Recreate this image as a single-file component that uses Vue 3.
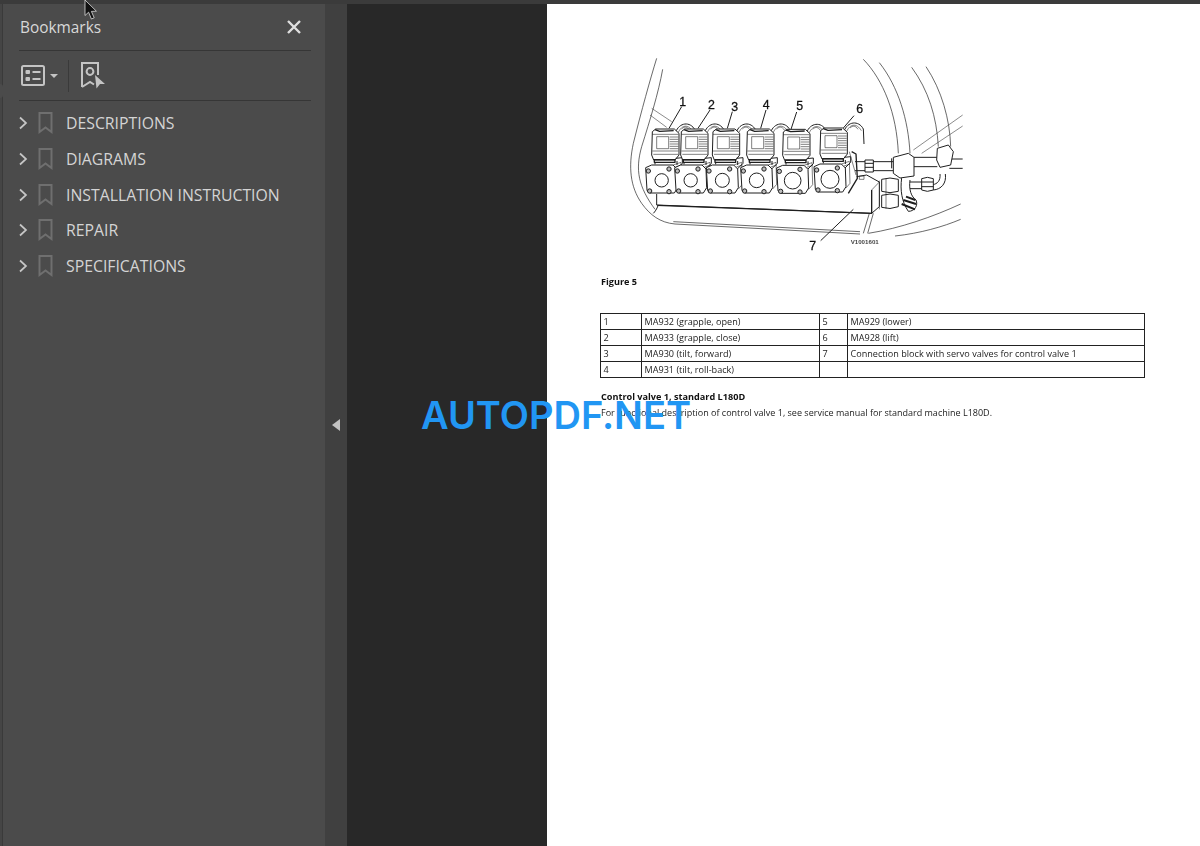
<template>
  <div class="viewer">
    <div class="top-strip"></div>
    <div class="main">
      <div class="edge"><span class="edge-notch"></span></div>

      <aside class="bookmarks">
        <header class="panel-head">
          <span class="panel-title">Bookmarks</span>
          <svg class="close" width="16" height="16" viewBox="0 0 16 16">
            <path d="M2 2 L14 14 M14 2 L2 14" />
          </svg>
        </header>

        <div class="toolbar">
          <svg width="24" height="21" viewBox="0 0 24 21" class="tool-icon">
            <rect x="1" y="1" width="22" height="19" rx="1.5" class="tool-line" />
            <rect x="4.5" y="5" width="4.5" height="4" rx="1" class="tool-fill" />
            <rect x="4.5" y="12" width="4.5" height="4" rx="1" class="tool-fill" />
            <path d="M11.5 7 H19.5 M11.5 14 H19.5" class="tool-line" />
          </svg>
          <span class="caret"></span>
          <span class="tool-sep"></span>
          <svg width="25" height="27" viewBox="0 0 25 27" class="tool-icon">
            <path d="M1 25 V1 H17 V13 M1 25 L9 20 L13 22.5" class="tool-line" />
            <circle cx="9" cy="9.5" r="3.4" class="tool-line" />
            <path d="M14 13 L24 22 L19 22 L15.5 26.5 Z" class="tool-fill" />
          </svg>
        </div>

        <ul class="tree">
          <li v-for="item in bookmarks" :key="item" class="tree-row">
            <svg width="10" height="14" viewBox="0 0 10 14" class="chevron">
              <path d="M2 1.5 L8 7 L2 12.5" />
            </svg>
            <svg width="15" height="22" viewBox="0 0 15 22" class="mark">
              <path d="M1.5 1 H13.5 V20 L7.5 15.5 L1.5 20 Z" />
            </svg>
            <span class="tree-label">{{ item }}</span>
          </li>
        </ul>
      </aside>

      <div class="splitter"><span class="split-arrow"></span></div>
      <div class="gutter"></div>

      <main class="page">
        <svg class="figure" width="380" height="210" viewBox="0 0 1140 630">
          <!-- cab outline and hoses -->
          <g class="ln outline">
            <path d="M170 25 C150 90 125 180 100 280 C85 350 90 410 125 460 C150 495 180 518 225 522 L780 552" />
            <path d="M188 58 C175 130 150 210 125 290 C105 360 115 410 165 478" />
            <path d="M155 175 L215 215 M150 195 L200 232" class="thin" />
            <path d="M220 515 L780 545" />
            <path d="M790 28 C850 90 890 190 895 310" />
            <path d="M838 38 C895 110 925 210 930 310" />
            <path d="M935 52 C985 120 1010 200 1015 290" />
            <path d="M978 50 C1025 120 1050 210 1052 290" />
            <path d="M940 300 L1088 195 M965 310 L1088 228" class="thin" />
            <path d="M805 550 C900 535 1000 500 1082 462" />
            <path d="M885 558 C960 550 1030 530 1082 508" />
            <path d="M790 550 L808 490 M803 550 L820 490" />
          </g>

          <!-- fittings on the right -->
          <g class="ln">
            <path d="M765 335 H880 M765 362 H880" />
            <path d="M795 330 H820 V366 H795 Z M795 340 H820 M795 352 H820" class="solid" />
            <path d="M875 325 V355" />
            <path d="M880 322 L925 310 L942 322 V378 L900 384 L880 370 Z" class="solid" />
            <path d="M942 322 H1012 M942 350 H1012 M1052 327 H1088 M1048 355 H1088" />
            <path d="M1012 295 L1045 285 L1060 305 L1052 345 L1020 352 L1010 330 Z" class="solid" />
            <path d="M1036 372 C1040 400 1024 418 1000 420 M1020 372 C1022 392 1012 402 998 404" />
            <path d="M965 386 Q982 378 1000 386 V420 Q982 428 965 420 Z M965 396 H1000 M965 410 H1000" class="solid" />
            <path d="M930 396 H965 M930 416 H965" />
            <path d="M905 384 C900 420 905 455 925 484 C945 484 955 465 948 450 C934 440 926 420 930 390" class="solid" />
            <path d="M845 388 Q870 380 895 388 V424 Q870 432 845 424 Z M845 436 Q870 428 895 436 V470 Q870 480 845 472 Z" class="solid" />
            <path d="M838 392 V478 M858 386 V476" class="thin" />
            <path d="M905 462 L945 478 M910 450 L948 462 M918 440 L946 450" class="heavy" />
          </g>

          <!-- manifold block -->
          <g class="ln">
            <path d="M170 432 V465 L815 490 L838 470 V396 L800 375 L770 380" class="solid" />
            <path d="M172 466 L815 490 V420" class="thick" />
            <path d="M815 420 L838 396" class="thin" />
            <path d="M175 465 C170 478 165 485 160 490" />
            <rect x="778" y="378" width="14" height="10" class="thin" />
          </g>

          <!-- solenoid valves -->
          <g v-for="unit in valves" :key="unit.label" :transform="`translate(${unit.x} ${unit.y})`" class="ln">
            <path d="M92 -98 C102 -128 136 -132 150 -105 L152 -60" class="solid" />
            <path d="M100 -98 C110 -120 130 -124 144 -100 M110 -108 C118 -116 126 -116 134 -104" class="thin" />
            <path d="M22 -100 L32 -108 H88 L102 -95 V-30 L90 -15 H26 L20 -30 Z" class="solid" />
            <path d="M30 -106 L44 -101 L86 -103" class="thick" />
            <rect x="35" y="-85" width="36" height="36" class="thin" />
            <path d="M22 -92 H100 M22 -42 H100 M25 -32 H100" class="thin" />
            <path d="M74 -84 H100 M74 -77 H100 M74 -70 H100 M74 -63 H100 M74 -56 H100 M74 -49 H100" class="thin" />
            <path d="M28 -16 H90 V-8 H28 Z" class="thick" />
            <path d="M30 -8 V-2 M92 -20 L112 -22 V-5 L95 12 M96 -12 L96 0" />
            <path d="M2 8 L20 0 H84 L96 12 L98 68 L88 84 H14 L6 76 Z" class="solid" />
            <path d="M84 0 L108 -8 L110 58 L98 72 M92 6 L110 0" class="thin" />
            <circle cx="50" cy="46" :r="unit.r" />
            <g class="bolts">
              <circle cx="10" cy="18" r="6.5" />
              <circle cx="72" cy="12" r="6.5" />
              <circle cx="14" cy="78" r="6.5" />
              <circle cx="72" cy="80" r="6.5" />
            </g>
            <path :d="unit.leader" />
          </g>
          <path d="M755 305 L768 312 L772 385 L745 430" class="ln thick" />
          <path d="M748 305 L768 375" class="ln thin" />

          <!-- leader for the manifold -->
          <path d="M760 478 L662 572" class="ln" />
          <text x="238" y="168" class="callout">1</text>
          <text x="324" y="178" class="callout">2</text>
          <text x="394" y="182" class="callout">3</text>
          <text x="488" y="176" class="callout">4</text>
          <text x="589" y="181" class="callout">5</text>
          <text x="769" y="190" class="callout">6</text>
          <text x="628" y="600" class="callout">7</text>
          <text x="752" y="581" class="code">V1001601</text>
        </svg>

        <p class="caption">Figure 5</p>

        <table class="parts">
          <colgroup>
            <col class="c-num" />
            <col class="c-name" />
            <col class="c-num2" />
            <col />
          </colgroup>
          <tbody>
            <tr v-for="row in parts" :key="row[0]">
              <td v-for="(cell, i) in row" :key="i">{{ cell }}</td>
            </tr>
          </tbody>
        </table>

        <h4 class="section">Control valve 1, standard L180D</h4>
        <p class="body-text">For functional description of control valve 1, see service manual for standard machine L180D.</p>
      </main>
    </div>

    <div class="watermark">AUTOPDF.NET</div>

    <svg class="pointer" width="16" height="22" viewBox="0 0 16 22">
      <path d="M1 0 V15.5 L4.6 12.2 L7.4 19 L10.2 17.8 L7.4 11.4 L12.4 11.2 Z" />
    </svg>
  </div>
</template>

<script setup>
const bookmarks = ['DESCRIPTIONS', 'DIAGRAMS', 'INSTALLATION INSTRUCTION', 'REPAIR', 'SPECIFICATIONS']

const valves = [
  { label: '1', x: 135, y: 345, r: 20, leader: 'M72 -110 L110 -175' },
  { label: '2', x: 222, y: 345, r: 20, leader: 'M72 -110 L108 -165' },
  { label: '3', x: 317, y: 345, r: 21, leader: 'M65 -110 L80 -160' },
  { label: '4', x: 420, y: 345, r: 22, leader: 'M62 -110 L78 -165' },
  { label: '5', x: 528, y: 346, r: 25, leader: 'M45 -108 L62 -160' },
  { label: '6', x: 640, y: 342, r: 27, leader: 'M90 -108 L122 -145' }
]

const parts = [
  ['1', 'MA932 (grapple, open)', '5', 'MA929 (lower)'],
  ['2', 'MA933 (grapple, close)', '6', 'MA928 (lift)'],
  ['3', 'MA930 (tilt, forward)', '7', 'Connection block with servo valves for control valve 1'],
  ['4', 'MA931 (tilt, roll-back)', '', '']
]
</script>

<style>
html,
body {
  margin: 0;
  background: #282828;
  overflow: hidden;
}
</style>

<style scoped>
.viewer {
  position: relative;
  width: 1200px;
  height: 846px;
  overflow: hidden;
  display: flex;
  flex-direction: column;
  font-family: "Open Sans", "Noto Sans", sans-serif;
}

.top-strip {
  height: 4px;
  flex: none;
  background: #3b3b3b;
}

.main {
  flex: 1;
  display: flex;
  min-height: 0;
}

.edge {
  position: relative;
  width: 2px;
  flex: none;
  background: #454545;
  border-right: 1px solid #3a3a3a;
}

.edge-notch {
  position: absolute;
  left: 0;
  top: 80px;
  width: 3px;
  height: 14px;
  background: #4b4b4b;
  border-radius: 0 4px 4px 0;
}

.bookmarks {
  width: 322px;
  flex: none;
  background: #4b4b4b;
  color: #d6d6d6;
  box-sizing: border-box;
  padding: 0 14px 0 16px;
}

.panel-head {
  height: 46px;
  display: flex;
  align-items: center;
  justify-content: space-between;
  border-bottom: 1px solid #363636;
  padding: 0 9px 0 1px;
}

.panel-title {
  font-size: 15.4px;
  color: #d8d8d8;
}

.close path {
  fill: none;
  stroke: #dedede;
  stroke-width: 2.4;
}

.toolbar {
  height: 49px;
  display: flex;
  align-items: center;
  border-bottom: 1px solid #363636;
  padding-left: 2px;
}

.tool-icon {
  flex: none;
}

.tool-line {
  fill: none;
  stroke: #c4c4c4;
  stroke-width: 2;
}

.tool-fill {
  fill: #c4c4c4;
}

.caret {
  width: 0;
  height: 0;
  margin-left: 5px;
  border-left: 4px solid transparent;
  border-right: 4px solid transparent;
  border-top: 4px solid #c4c4c4;
}

.tool-sep {
  width: 1px;
  height: 32px;
  margin: 0 12px 0 10px;
  background: #3a3a3a;
}

.tree {
  list-style: none;
  margin: 4.6px 0 0;
  padding: 0;
}

.tree-row {
  height: 35.6px;
  display: flex;
  align-items: center;
}

.chevron {
  flex: none;
  margin-right: 10px;
  margin-left: -1px;
}

.chevron path {
  fill: none;
  stroke: #c6c6c6;
  stroke-width: 1.7;
}

.mark {
  flex: none;
  margin-right: 13px;
}

.mark path {
  fill: none;
  stroke: #6f6f6f;
  stroke-width: 2;
}

.tree-label {
  font-size: 15.8px;
  color: #d4d4d4;
}

.splitter {
  width: 22px;
  flex: none;
  background: #404040;
  display: flex;
  align-items: center;
  justify-content: center;
}

.split-arrow {
  width: 0;
  height: 0;
  border-top: 6px solid transparent;
  border-bottom: 6px solid transparent;
  border-right: 8px solid #c2c2c2;
}

.gutter {
  width: 200px;
  flex: none;
  background: #282828;
}

.page {
  flex: 1;
  background: #fff;
  color: #222;
  box-sizing: border-box;
  padding: 46px 55px 0 53px;
}

.figure {
  display: block;
  filter: blur(0.35px);
}

.ln {
  fill: none;
  stroke: #1f1f1f;
  stroke-width: 3;
  stroke-linejoin: round;
}

.outline {
  stroke: #333;
  stroke-width: 2.2;
}

.ln .thin,
.thin {
  stroke-width: 1.7;
}

.ln .heavy {
  stroke-width: 6;
}

.ln .thick,
.thick {
  stroke-width: 4;
}

.solid {
  fill: #fff;
}

.bolts circle {
  fill: #bdbdbd;
}

.callout {
  font-family: "Liberation Sans", Arial, sans-serif;
  font-size: 37px;
  fill: #111;
  stroke: #111;
  stroke-width: 0.8;
}

.code {
  font-family: "Liberation Sans", Arial, sans-serif;
  font-size: 18.5px;
  font-weight: bold;
  fill: #444;
  stroke: none;
}

.caption {
  margin: 15px 0 0 1px;
  font-size: 9.15px;
  line-height: 13px;
  font-weight: 700;
  color: #111;
  filter: blur(0.25px);
}

.parts {
  width: 544.5px;
  margin-top: 25px;
  border-collapse: collapse;
  table-layout: fixed;
  font-size: 9.1px;
  line-height: 12px;
  color: #222;
  filter: blur(0.2px);
}

.c-num {
  width: 41px;
}

.c-name {
  width: 178px;
}

.c-num2 {
  width: 28px;
}

.parts td {
  height: 16px;
  padding: 0 3px 0 2.5px;
  box-sizing: border-box;
  border: 1px solid #222;
  white-space: nowrap;
}

.section {
  margin: 12px 0 0 1px;
  font-size: 9.15px;
  line-height: 14px;
  font-weight: 700;
  color: #111;
  filter: blur(0.25px);
}

.body-text {
  margin: 2px 0 0 1px;
  font-size: 9.03px;
  line-height: 14px;
  color: #222;
  filter: blur(0.2px);
}

.watermark {
  position: absolute;
  left: 421px;
  top: 393px;
  font-family: Inter, Roboto, sans-serif;
  font-weight: 600;
  font-size: 38px;
  line-height: 45px;
  color: #2196f3;
  white-space: nowrap;
}

.pointer {
  position: absolute;
  left: 84px;
  top: 0;
}

.pointer path {
  fill: #111;
  stroke: #ddd;
  stroke-width: 0.8;
}
</style>
